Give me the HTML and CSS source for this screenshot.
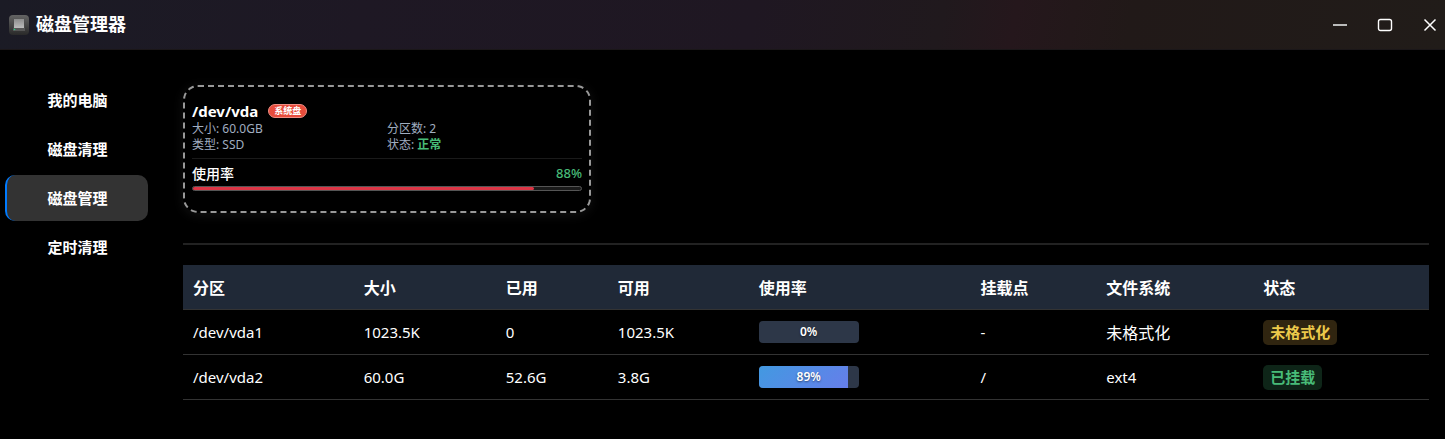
FILE: index.html
```
<!DOCTYPE html>
<html lang="zh-CN">
<head>
    <meta charset="UTF-8">
    <meta name="viewport" content="width=device-width, initial-scale=1.0">
    <title>磁盘管理器</title>
    <link rel="stylesheet" href="styles.css">
</head>
<body>
    <header class="titlebar">
        <svg class="app-icon" viewBox="0 0 22 22" aria-hidden="true">
            <defs>
                <linearGradient id="caseFill" x1="0" y1="0" x2="0" y2="1">
                    <stop offset="0" stop-color="#646464"/>
                    <stop offset="1" stop-color="#292929"/>
                </linearGradient>
                <linearGradient id="diskFill" x1="0" y1="0" x2="0" y2="1">
                    <stop offset="0" stop-color="#8d8d8d"/>
                    <stop offset="1" stop-color="#bcbcbc"/>
                </linearGradient>
            </defs>
            <rect x="1" y="1" width="20" height="20" rx="4" fill="url(#caseFill)"/>
            <path d="M6 5h10l1 9v3H5v-3z" fill="#4b4b4b"/>
            <path d="M6 5h10v9H6z" fill="url(#diskFill)"/>
            <path d="M5 14h12v3H5z" fill="#565656"/>
            <circle cx="6.5" cy="15.5" r=".8" fill="#20d080"/>
        </svg>
        <h1 class="app-title">磁盘管理器</h1>
        <div class="window-buttons">
            <button type="button" aria-label="最小化">
                <svg viewBox="0 0 16 16"><path d="M1 8h14" stroke="#bbb" stroke-width="2"/></svg>
            </button>
            <button type="button" aria-label="最大化">
                <svg viewBox="0 0 16 16"><rect x="1.5" y="2.5" width="13" height="11" rx="2" fill="none" stroke="#fff" stroke-width="1.4"/></svg>
            </button>
            <button type="button" aria-label="关闭">
                <svg viewBox="0 0 16 16"><path d="M2.500 2.500l11 11M13.500 2.500l-11 11" stroke="#fff" stroke-width="1.5"/></svg>
            </button>
        </div>
    </header>

    <div class="layout">
        <nav class="sidebar">
            <a href="#computer">我的电脑</a>
            <a href="#clean">磁盘清理</a>
            <a href="#manage" class="active">磁盘管理</a>
            <a href="#schedule">定时清理</a>
        </nav>

        <main class="content">
            <section class="disk-card">
                <div class="disk-head">
                    <h2 class="disk-name">/dev/vda</h2>
                    <span class="system-tag">系统盘</span>
                </div>
                <div class="disk-info">
                    <span>大小: 60.0GB</span>
                    <span>分区数: 2</span>
                    <span>类型: SSD</span>
                    <span>状态: <b class="ok">正常</b></span>
                </div>
                <div class="usage">
                    <div class="usage-label">
                        <span>使用率</span>
                        <span class="usage-value">88%</span>
                    </div>
                    <div class="usage-track">
                        <div class="usage-fill" style="width: 88%"></div>
                    </div>
                </div>
            </section>

            <hr class="divider">

            <table class="partitions">
                <colgroup>
                    <col class="col-name">
                    <col class="col-size">
                    <col class="col-used">
                    <col class="col-free">
                    <col class="col-rate">
                    <col class="col-mount">
                    <col class="col-fs">
                    <col class="col-state">
                </colgroup>
                <thead>
                    <tr>
                        <th>分区</th>
                        <th>大小</th>
                        <th>已用</th>
                        <th>可用</th>
                        <th>使用率</th>
                        <th>挂载点</th>
                        <th>文件系统</th>
                        <th>状态</th>
                    </tr>
                </thead>
                <tbody>
                    <tr>
                        <td>/dev/vda1</td>
                        <td>1023.5K</td>
                        <td>0</td>
                        <td>1023.5K</td>
                        <td>
                            <div class="bar">
                                <div class="bar-fill" style="width: 0%"></div>
                                <span class="bar-text">0%</span>
                            </div>
                        </td>
                        <td>-</td>
                        <td class="cjk">未格式化</td>
                        <td><span class="badge badge-warn">未格式化</span></td>
                    </tr>
                    <tr>
                        <td>/dev/vda2</td>
                        <td>60.0G</td>
                        <td>52.6G</td>
                        <td>3.8G</td>
                        <td>
                            <div class="bar">
                                <div class="bar-fill" style="width: 89%"></div>
                                <span class="bar-text">89%</span>
                            </div>
                        </td>
                        <td>/</td>
                        <td>ext4</td>
                        <td><span class="badge badge-ok">已挂载</span></td>
                    </tr>
                </tbody>
            </table>
        </main>
    </div>
</body>
</html>
```
FILE: styles.css
```
* {
    margin: 0;
    padding: 0;
    box-sizing: border-box;
}

body {
    background: #000;
    color: #fff;
    font-family: "Noto Sans", "Noto Sans CJK SC", sans-serif;
    font-size: 15px;
}

/* title bar */
.titlebar {
    display: flex;
    align-items: center;
    padding: 12px 7px 12px 8px;
    background: linear-gradient(100deg, #1b1b25 0%, #1e1824 25%, #1f1722 52%, #20191d 65%, #25171c 70%, #211918 78%, #211c19 100%);
    border-bottom: 1px solid #1b1719;
}
.app-icon {
    width: 22px;
    height: 22px;
}
.app-title {
    margin-left: 6px;
    font-size: 18px;
    line-height: 25px;
}
.window-buttons {
    display: flex;
    gap: 29px;
    margin-left: auto;
}
.window-buttons button {
    width: 16px;
    height: 16px;
    border: none;
    background: none;
    cursor: pointer;
}
.window-buttons svg {
    display: block;
}

.layout {
    display: flex;
}

/* sidebar */
.sidebar {
    display: flex;
    flex-direction: column;
    gap: 3px;
    width: 153px;
    padding: 27px 5px;
}
.sidebar a {
    padding: 11px 0;
    border-left: 2px solid transparent;
    border-radius: 10px;
    color: #fff;
    font-weight: bold;
    line-height: 24px;
    text-align: center;
    text-decoration: none;
}
.sidebar a.active {
    background: #333;
    border-left-color: #007bff;
}

.content {
    flex: 1;
    padding: 35px 16px 35px 30px;
}

/* disk card */
.disk-card {
    max-width: 408px;
    padding: 15px 7px 20px;
    border: 2px dashed #999;
    border-radius: 15px;
    box-shadow: 0 2px 12px rgba(255, 255, 255, 0.07);
    background: #000;
}
.disk-head {
    display: flex;
    align-items: center;
    gap: 10px;
}
.disk-name {
    font-size: 15px;
    font-weight: bold;
    line-height: 18px;
}
.system-tag {
    padding: 0 5px;
    border: 1px solid #ef8d83;
    border-radius: 10px;
    background: #e74c3c;
    font-size: 9px;
    font-weight: bold;
    line-height: 12px;
}
.disk-info {
    display: grid;
    grid-template-columns: 1fr 1fr;
    margin-top: 1px;
    color: #a0aec0;
    font-size: 12px;
    line-height: 16px;
}
.ok {
    color: #48bb78;
}
.usage {
    margin-top: 5px;
    padding-top: 5px;
    border-top: 1px solid #1a1a1a;
}
.usage-label {
    display: flex;
    justify-content: space-between;
    font-size: 14px;
    font-weight: 500;
    line-height: 19px;
}
.usage-value {
    color: #48bb78;
    font-size: 13px;
}
.usage-track {
    height: 5px;
    margin-top: 3px;
    border: 1px solid #555;
    border-radius: 3px;
    background: #1a1a1a;
}
.usage-fill {
    height: 100%;
    border-radius: 2px;
    background: #dc3545;
}

.divider {
    height: 2px;
    margin: 30px 0 20px;
    border: none;
    background: #222;
}

/* partition table */
.partitions {
    width: 100%;
    border-spacing: 0;
    table-layout: fixed;
}
.partitions th,
.partitions td {
    height: 45px;
    padding: 0 10px;
    border-bottom: 1px solid #333;
    text-align: left;
}
.partitions th {
    background: #202937;
    font-size: 16px;
}
.partitions .cjk {
    font-size: 16px;
}
.col-name { width: 13.7%; }
.col-size { width: 11.4%; }
.col-used { width: 9%; }
.col-free { width: 11.3%; }
.col-rate { width: 17.8%; }
.col-mount { width: 10.1%; }
.col-fs { width: 12.6%; }
.col-state { width: 14.1%; }

.bar {
    position: relative;
    width: 100px;
    height: 22px;
    border-radius: 4px;
    background: #2d3748;
    overflow: hidden;
}
.bar-fill {
    height: 100%;
    background: linear-gradient(135deg, #4299e1, #667eea);
}
.bar-text {
    position: absolute;
    inset: 0;
    font-size: 12px;
    font-weight: 600;
    line-height: 22px;
    text-align: center;
    text-shadow: 0 1px 2px rgba(0, 0, 0, 0.5);
}

.badge {
    display: inline-block;
    padding: 0 7px;
    border-radius: 5px;
    font-weight: bold;
    line-height: 25px;
}
.badge-warn {
    background: #302510;
    color: #ecc94b;
}
.badge-ok {
    background: #0e2518;
    color: #48bb78;
}
```
